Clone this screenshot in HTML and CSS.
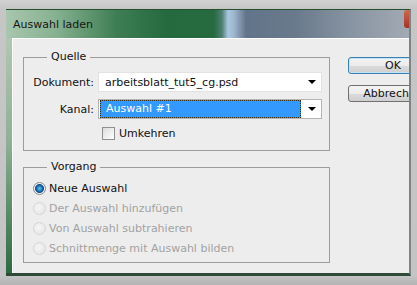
FILE: index.html
```
<!DOCTYPE html>
<html lang="de">
	<head>
		<meta charset="UTF-8" />
		<title>Auswahl laden</title>
		<link rel="stylesheet" href="styles.css">
	</head>
	<body>
		<div class="screen">
			<div class="window">
				<div class="titlebar">
					<span class="title">Auswahl laden</span>
					<span class="close"></span>
				</div>
				<div class="client">
					<div class="groups">
						<fieldset class="group source">
							<legend>Quelle</legend>
							<div class="row">
								<label class="field-label">Dokument:</label>
								<div class="select">
									<span class="value">arbeitsblatt_tut5_cg.psd</span>
									<span class="arrow"></span>
								</div>
							</div>
							<div class="row">
								<label class="field-label">Kanal:</label>
								<div class="select focused">
									<span class="value selected">Auswahl #1</span>
									<span class="arrow"></span>
								</div>
							</div>
							<div class="row check-row">
								<span class="checkbox"></span>
								<span>Umkehren</span>
							</div>
						</fieldset>

						<fieldset class="group action">
							<legend>Vorgang</legend>
							<div class="radio-row">
								<span class="radio checked"></span>
								<span>Neue Auswahl</span>
							</div>
							<div class="radio-row disabled">
								<span class="radio"></span>
								<span>Der Auswahl hinzufügen</span>
							</div>
							<div class="radio-row disabled">
								<span class="radio"></span>
								<span>Von Auswahl subtrahieren</span>
							</div>
							<div class="radio-row disabled">
								<span class="radio"></span>
								<span>Schnittmenge mit Auswahl bilden</span>
							</div>
						</fieldset>
					</div>

					<div class="buttons">
						<button class="btn default">OK</button>
						<button class="btn">Abbrechen</button>
					</div>
				</div>
			</div>
		</div>
	</body>
</html>
```

FILE: styles.css
```
body {
	margin: 0;
	font-family: "DejaVu Sans", sans-serif;
	font-size: 11px;
	color: #111;
	background: #c4c4c4;
}

.screen {
	width: 417px;
	height: 285px;
	overflow: hidden;
	box-sizing: border-box;
	padding: 9px 0 0 6px;
	background: linear-gradient(to bottom, #d2d2d2 0px, #c6c6c6 8px, #c4c4c4 276px, #b2b2b2 285px);
}

.window {
	width: 405px;
	height: 267px;
	box-sizing: border-box;
	border-top: 1px solid #24502e;
	border-right: 2px solid #7e8486;
	border-bottom: 3px solid #2f4a38;
	background: linear-gradient(to bottom, #b9cdbb 0%, #8fb096 50%, #2d6b3f 100%);
	display: flex;
	flex-direction: column;
}

.titlebar {
	height: 28px;
	flex-shrink: 0;
	display: flex;
	align-items: flex-start;
	justify-content: space-between;
	background: linear-gradient(to right, #a9c6ae 0px, #86b190 50px, #3f7e54 110px, #256a3e 160px, #276a40 208px, #4f7f74 216px, #a8c6e2 222px, #9fb6cc 228px, #62748a 240px, #6a7a8c 290px, #8a96a4 350px, #a2aab4 403px);
}

.title {
	padding: 8px 0 0 7px;
	color: #161616;
}

.close {
	width: 5px;
	height: 18px;
	background: linear-gradient(to bottom, #d06850, #a83020);
	border-radius: 3px 0 0 3px;
}

.client {
	flex: 1;
	margin-left: 6px;
	display: flex;
	align-items: flex-start;
	overflow: hidden;
	box-sizing: border-box;
	padding: 11px 0 0 10px;
	background: #ededed;
	border-top: 1px solid #ffffff;
	border-left: 1px solid #ffffff;
}

.groups {
	width: 307px;
	flex-shrink: 0;
}

.group {
	margin: 0;
	border: 1px solid #9c9c9c;
	min-width: 0;
}

.group legend {
	margin-left: 14px;
	padding: 0 4px;
	line-height: 14px;
	color: #111;
}

.source {
	padding: 8px 0 10px 9px;
}

.action {
	margin-top: 9px;
	padding: 4px 0 4px 9px;
}

.row {
	display: flex;
	align-items: center;
	margin-bottom: 7px;
}

.field-label {
	width: 61px;
	margin-right: 4px;
	text-align: right;
}

.select {
	width: 224px;
	height: 20px;
	box-sizing: border-box;
	display: flex;
	align-items: center;
	justify-content: space-between;
	background: #ffffff;
	border: 1px solid #e2e2e2;
	padding: 0 5px 0 6px;
}

.select.focused {
	border-color: #b4b4b4;
	padding: 0 5px 0 1px;
}

.value.selected {
	width: 201px;
	height: 18px;
	box-sizing: border-box;
	padding-left: 5px;
	line-height: 16px;
	background: #3399ff;
	color: #ffffff;
	border: 1px dotted #3a2a10;
}

.arrow {
	width: 0;
	height: 0;
	border-left: 4px solid transparent;
	border-right: 4px solid transparent;
	border-top: 4px solid #000;
}

.check-row {
	margin: 8px 0 0 69px;
}

.checkbox {
	width: 13px;
	height: 13px;
	box-sizing: border-box;
	margin-right: 4px;
	border: 1px solid #8e8f8f;
	background: linear-gradient(135deg, #dcdcdc, #ffffff);
}

.radio-row {
	height: 20px;
	display: flex;
	align-items: center;
}

.radio {
	width: 13px;
	height: 13px;
	box-sizing: border-box;
	margin-right: 3px;
	border-radius: 50%;
	border: 1px solid #d6d6d6;
	background: radial-gradient(circle at 40% 40%, #f6f6f6, #e2e2e2);
}

.radio.checked {
	border-color: #8a8a8a;
	background: radial-gradient(circle, #62c4f0 0, #1a6cae 3px, #0d4a86 4px, #f4f4f4 5px, #dedede 100%);
}

.radio-row.disabled {
	color: #a2a2a2;
}

.buttons {
	display: flex;
	flex-direction: column;
	gap: 11px;
	margin: 7px 0 0 18px;
}

.btn {
	width: 90px;
	height: 17px;
	padding: 0;
	font-family: "DejaVu Sans", sans-serif;
	font-size: 11px;
	color: #111;
	border: 1px solid #707070;
	border-radius: 3px;
	background: linear-gradient(to bottom, #f4f4f4 0%, #ebebeb 50%, #dbdbdb 51%, #cfcfcf 100%);
}

.btn.default {
	border-color: #3c7fb1;
	box-shadow: inset 0 0 0 1px #bfe4f7;
}
```
